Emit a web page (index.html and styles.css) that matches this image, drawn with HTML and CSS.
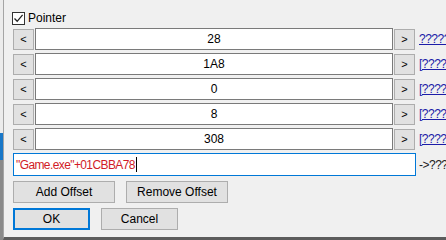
FILE: index.html
```html
<!DOCTYPE html>
<html>
<head>
<meta charset="utf-8">
<link rel="stylesheet" href="styles.css">
</head>
<body>
<div class="edge">
  <div class="edge-top"></div>
  <div class="edge-mid"></div>
  <div class="edge-bot"></div>
</div>
<div class="dialog">
  <label class="check-row">
    <span class="checkbox"><svg width="11" height="11" viewBox="0 0 11 11"><path d="M1.5 5.5 L4.2 8.3 L9.6 1.8" fill="none" stroke="#222" stroke-width="1.3"/></svg></span>
    <span class="check-label">Pointer</span>
  </label>
  <div class="offsets">
    <div class="off-row"><span class="btn sq">&lt;</span><span class="field">28</span><span class="btn sq">&gt;</span><span class="link">?????</span></div>
    <div class="off-row"><span class="btn sq">&lt;</span><span class="field">1A8</span><span class="btn sq">&gt;</span><span class="link">[????</span></div>
    <div class="off-row"><span class="btn sq">&lt;</span><span class="field">0</span><span class="btn sq">&gt;</span><span class="link">[????</span></div>
    <div class="off-row"><span class="btn sq">&lt;</span><span class="field">8</span><span class="btn sq">&gt;</span><span class="link">[????</span></div>
    <div class="off-row"><span class="btn sq">&lt;</span><span class="field">308</span><span class="btn sq">&gt;</span><span class="link">[????</span></div>
  </div>
  <div class="addr-row">
    <span class="addr">"Game.exe"+01CBBA78<span class="caret"></span></span>
    <span class="result">-&gt;???</span>
  </div>
  <div class="btn-row">
    <span class="btn wide">Add Offset</span>
    <span class="btn wide">Remove Offset</span>
  </div>
  <div class="btn-row">
    <span class="btn dlg default">OK</span>
    <span class="btn dlg">Cancel</span>
  </div>
</div>
</body>
</html>
```
FILE: styles.css
```css
html, body {
  margin: 0;
  padding: 0;
}
body {
  width: 446px;
  height: 240px;
  overflow: hidden;
  background: #f0f0f0;
  display: flex;
  font-family: "Liberation Sans", Arial, sans-serif;
  font-size: 12px;
  color: #000;
}
.edge {
  width: 3px;
  flex-shrink: 0;
  display: flex;
  flex-direction: column;
}
.edge-top { height: 133px; background: #ececec; }
.edge-mid { height: 27px; background: #1a78c8; }
.edge-bot { flex: 1; background: #8a8a8a; }
.dialog {
  flex: 1;
  min-width: 0;
  overflow: hidden;
  border-left: 1px solid #a5a5a5;
  border-bottom: 3px solid #5c5c5c;
  box-sizing: border-box;
  height: 240px;
  padding: 12px 0 0 8px;
  display: flex;
  flex-direction: column;
}
.check-row {
  display: flex;
  align-items: center;
  height: 13px;
  gap: 3px;
}
.checkbox {
  width: 11px;
  height: 11px;
  border: 1px solid #333;
  background: #fff;
  display: flex;
}
.check-label {
  line-height: 13px;
}
.offsets {
  display: flex;
  flex-direction: column;
  gap: 3px;
  margin-top: 3px;
  padding-left: 1px;
}
.off-row {
  display: flex;
  align-items: center;
  height: 22px;
  gap: 1px;
}
.btn {
  display: flex;
  align-items: center;
  justify-content: center;
  background: #e1e1e1;
  border: 1px solid #adadad;
  box-sizing: border-box;
  flex-shrink: 0;
}
.sq {
  width: 21px;
  height: 21px;
  font-size: 11px;
}
.field {
  flex-shrink: 0;
  width: 358px;
  height: 22px;
  box-sizing: border-box;
  border: 1px solid #7a7a7a;
  background: #fff;
  display: flex;
  align-items: center;
  justify-content: center;
}
.link {
  flex-shrink: 0;
  margin-left: 3px;
  color: #1c1ca8;
  text-decoration: underline;
  white-space: nowrap;
  letter-spacing: -0.5px;
}
.addr-row {
  display: flex;
  align-items: center;
  margin-top: 3px;
  gap: 3px;
}
.addr {
  flex-shrink: 0;
  width: 403px;
  height: 23px;
  box-sizing: border-box;
  border: 1px solid #0078d7;
  background: #fff;
  color: #d11b27;
  display: flex;
  align-items: center;
  padding-left: 2px;
  margin-left: 1px;
  letter-spacing: -0.6px;
}
.caret {
  width: 1px;
  height: 15px;
  background: #000;
  margin-left: 1px;
}
.result {
  flex-shrink: 0;
  color: #222;
  white-space: nowrap;
  letter-spacing: -0.5px;
}
.btn-row {
  display: flex;
  gap: 11px;
  margin-top: 5px;
  padding-left: 1px;
}
.wide {
  width: 102px;
  height: 22px;
}
.dlg {
  width: 77px;
  height: 22px;
}
.default {
  border: 2px solid #0078d7;
}
```
